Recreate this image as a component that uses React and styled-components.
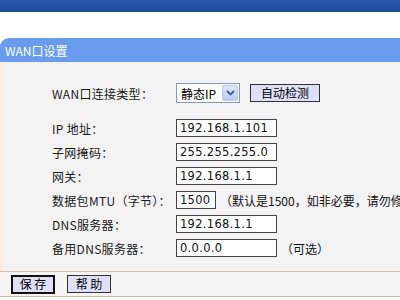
import styled, { createGlobalStyle } from 'styled-components'

const GlobalStyle = createGlobalStyle`
  html, body {
    margin: 0;
    padding: 0;
    background: #ffffff;
    overflow: hidden;
  }
  body {
    width: 400px;
    height: 300px;
    font-family: "Noto Sans CJK SC", "DejaVu Sans", sans-serif;
    font-size: 12px;
    color: #111;
  }
`

const rows = [
  { label: 'IP 地址：', value: '192.168.1.101' },
  { label: '子网掩码：', value: '255.255.255.0' },
  { label: '网关：', value: '192.168.1.1' },
  { label: '数据包MTU（字节）：', value: '1500', short: true, note: '（默认是1500，如非必要，请勿修改）' },
  { label: 'DNS服务器：', value: '192.168.1.1' },
  { label: '备用DNS服务器：', value: '0.0.0.0', note: '（可选）' },
]

export default function App() {
  return (
    <Page>
      <GlobalStyle />
      <TopBar />
      <Spacer />
      <Header>WAN口设置</Header>
      <Body>
        <Row first>
          <Label>WAN口连接类型：</Label>
          <Field>
            <Select>
              <SelectText>静态IP</SelectText>
              <ArrowBox>
                <svg width="9" height="6" viewBox="0 0 9 6">
                  <path d="M1 1 L4.5 4.5 L8 1" fill="none" stroke="#3d5d9c" strokeWidth="1.8" />
                </svg>
              </ArrowBox>
            </Select>
            <Button>自动检测</Button>
          </Field>
        </Row>
        {rows.map(row => (
          <Row key={row.label}>
            <Label>{row.label}</Label>
            <Field>
              <TextBox short={row.short}>{row.value}</TextBox>
              {row.note && <Note>{row.note}</Note>}
            </Field>
          </Row>
        ))}
      </Body>
      <Footer>
        <Button isDefault wide>保 存</Button>
        <Button wide>帮 助</Button>
      </Footer>
    </Page>
  )
}

const Page = styled.div`
  width: 400px;
  height: 300px;
  display: flex;
  flex-direction: column;
  overflow: hidden;
  white-space: nowrap;
`

const TopBar = styled.div`
  height: 12px;
  background: linear-gradient(#2a5cae, #1b4b98);
`

const Spacer = styled.div`
  height: 26px;
  background: #ffffff;
`

const Header = styled.div`
  height: 24px;
  display: flex;
  align-items: center;
  padding-left: 5px;
  padding-top: 1px;
  box-sizing: border-box;
  background: #6a9cee;
  border-radius: 9px 0 0 0;
  color: #ffffff;
  font-size: 12px;
`

const Body = styled.div`
  background: #f3f3f3;
  border-left: 3px solid #fbeee0;
  padding: 19px 0 11px 49px;
  display: flex;
  flex-direction: column;
`

const Row = styled.div`
  height: 24px;
  display: grid;
  grid-template-columns: 124px 1fr;
  align-items: center;
  margin-bottom: ${props => (props.first ? '11px' : '0')};
`

const Label = styled.div`
  color: #1a1a1a;
  font-size: 12px;
  letter-spacing: 0.3px;
`

const Field = styled.div`
  display: flex;
  align-items: center;
  min-width: 0;
  overflow: hidden;
`

const Select = styled.div`
  width: 64px;
  height: 20px;
  box-sizing: border-box;
  border: 1px solid #7f9db9;
  background: #ffffff;
  display: flex;
  align-items: center;
  justify-content: space-between;
  padding: 1px;
`

const SelectText = styled.span`
  padding-left: 3px;
  font-size: 12px;
  color: #000;
`

const ArrowBox = styled.span`
  width: 16px;
  height: 16px;
  box-sizing: border-box;
  border: 1px solid #b8cbef;
  border-radius: 2px;
  background: linear-gradient(#dce6fb, #bccdf3);
  display: flex;
  align-items: center;
  justify-content: center;
`

const Button = styled.button`
  height: ${props => (props.isDefault ? '19px' : '18px')};
  min-width: ${props => (props.wide ? '44px' : '70px')};
  margin-left: ${props => (props.wide ? '0' : '10px')};
  padding: 0 6px;
  box-sizing: border-box;
  border: ${props => (props.isDefault ? '2px solid #111' : '1px solid #333')};
  background: #dfdff8;
  color: #000;
  font-family: "Noto Sans CJK SC", "DejaVu Sans", sans-serif;
  font-size: 12px;
  line-height: 1;
  display: flex;
  align-items: center;
  justify-content: center;
`

const TextBox = styled.div`
  flex: none;
  width: ${props => (props.short ? '40px' : '101px')};
  height: 18px;
  box-sizing: border-box;
  border: 1px solid #444;
  background: #ffffff;
  padding-left: 3px;
  display: flex;
  align-items: center;
  font-family: "DejaVu Sans", sans-serif;
  font-size: 11.5px;
  letter-spacing: 0.3px;
  color: #111;
`

const Note = styled.span`
  margin-left: 4px;
  color: #111;
  font-size: 12px;
`

const Footer = styled.div`
  height: 26px;
  box-sizing: border-box;
  border-top: 1px solid #dcbf98;
  border-bottom: 1px solid #dcbf98;
  background: #f4f4f4;
  display: flex;
  align-items: center;
  gap: 12px;
  padding-left: 11px;
`
